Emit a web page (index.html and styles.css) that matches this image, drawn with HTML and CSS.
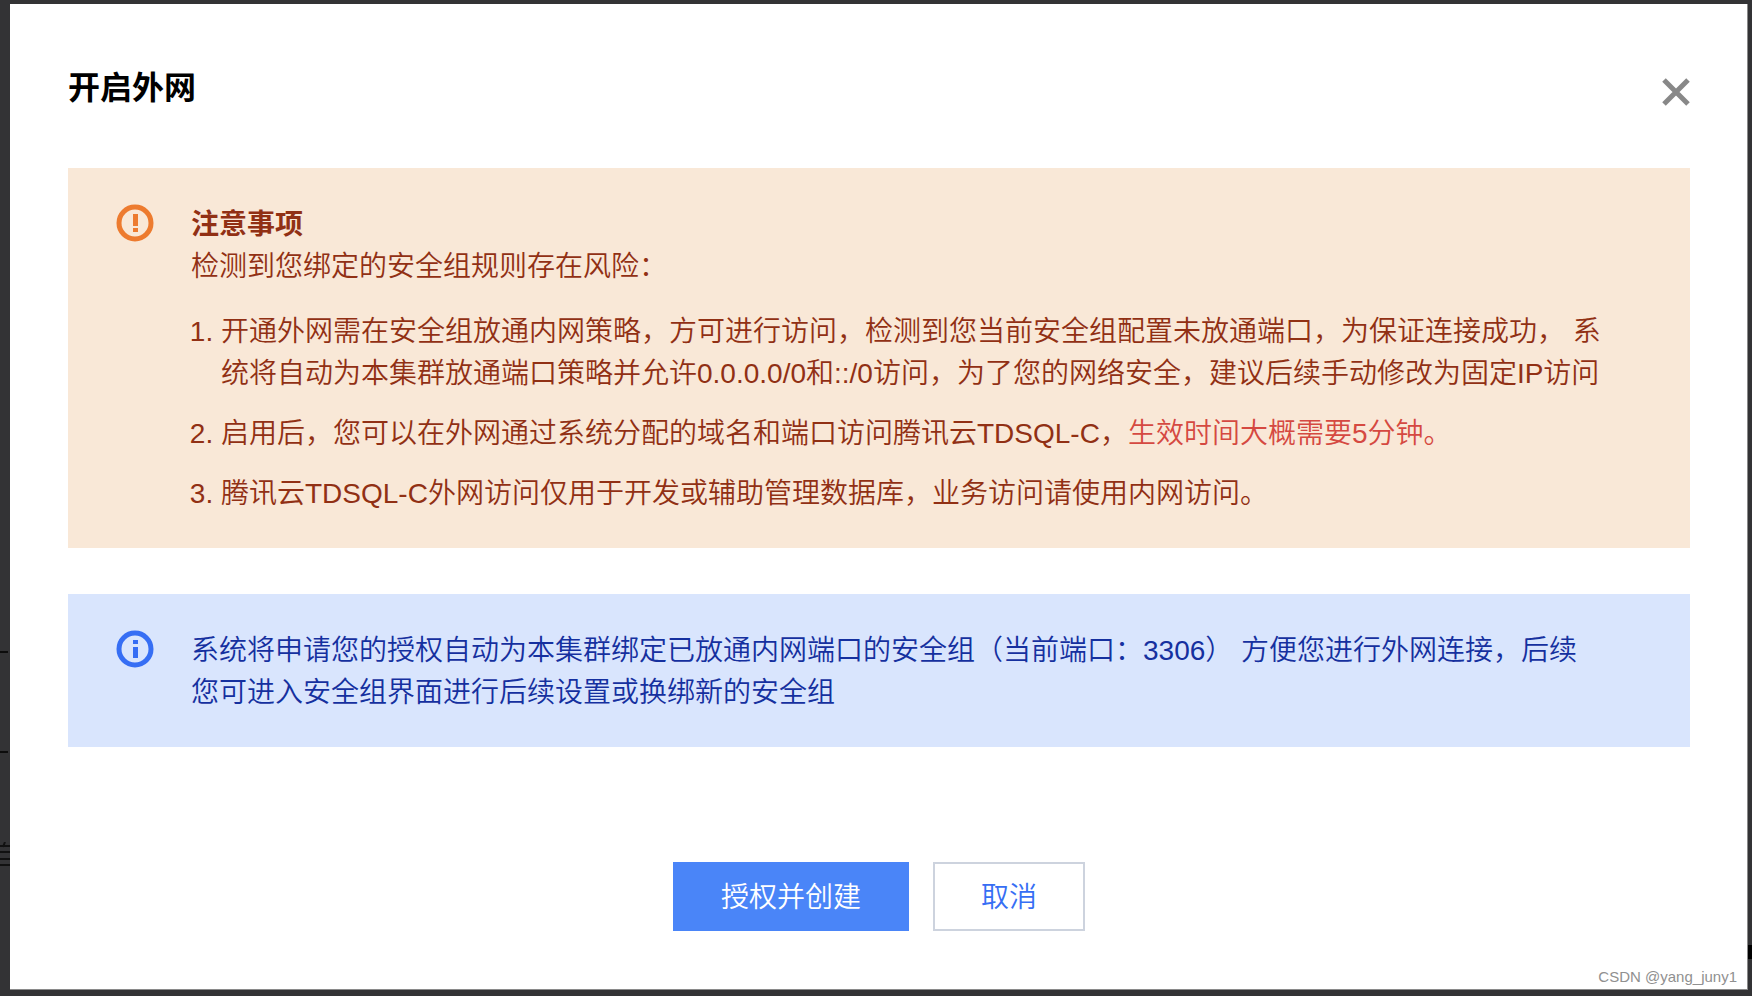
FILE: index.html
```html
<!DOCTYPE html>
<html lang="zh-CN">
<head>
  <meta charset="utf-8">
  <title>开启外网</title>
  <meta name="viewport" content="width=device-width, initial-scale=1">
  <link rel="stylesheet" href="styles.css">
</head>
<body>

  <!-- page content that shows beside the dialog -->
  <div class="page-behind" aria-hidden="true">
    <span class="dash dash-first"></span>
    <span class="dash dash-second"></span>
    <svg class="edge-mark" width="10" height="24" viewBox="0 0 10 24" stroke="#111" stroke-width="2">
      <path d="M5 0L3 5M0 4H10M0 10H10M0 17H10M0 23H10" />
    </svg>
    <span class="scroll-mark"></span>
  </div>

  <div class="dialog" role="dialog" aria-labelledby="dialog-title">
    <header class="dialog-header">
      <h1 id="dialog-title">开启外网</h1>
      <button type="button" class="close" aria-label="关闭">
        <svg width="28" height="28" viewBox="0 0 28 28" fill="none" stroke="#888" stroke-width="5">
          <path d="M2 2L26 26M26 2L2 26" />
        </svg>
      </button>
    </header>

    <section class="alert alert-warning">
      <svg class="alert-icon" width="38" height="38" viewBox="0 0 38 38">
        <circle cx="19" cy="19" r="16" fill="none" stroke="#ed7b2f" stroke-width="5" />
        <path d="M17 10h5v12h-5zM17 24h5v4h-5z" fill="#ed7b2f" />
      </svg>
      <div class="alert-body">
        <h2>注意事项</h2>
        <p>检测到您绑定的安全组规则存在风险：</p>
        <ol>
          <li>开通外网需在安全组放通内网策略，方可进行访问，检测到您当前安全组配置未放通端口，为保证连接成功， 系统将自动为本集群放通端口策略并允许0.0.0.0/0和::/0访问，为了您的网络安全，建议后续手动修改为固定IP访问</li>
          <li>启用后，您可以在外网通过系统分配的域名和端口访问腾讯云TDSQL-C，<span class="danger">生效时间大概需要5分钟。</span></li>
          <li>腾讯云TDSQL-C外网访问仅用于开发或辅助管理数据库，业务访问请使用内网访问。</li>
        </ol>
      </div>
    </section>

    <section class="alert alert-info">
      <svg class="alert-icon" width="38" height="38" viewBox="0 0 38 38">
        <circle cx="19" cy="19" r="16" fill="none" stroke="#366ef4" stroke-width="5" />
        <path d="M17 10h5v4h-5zM17 17h5v11h-5z" fill="#366ef4" />
      </svg>
      <div class="alert-body">
        <p>系统将申请您的授权自动为本集群绑定已放通内网端口的安全组（当前端口：3306） 方便您进行外网连接，后续您可进入安全组界面进行后续设置或换绑新的安全组</p>
      </div>
    </section>

    <footer class="dialog-footer">
      <button type="button" class="btn btn-primary">授权并创建</button>
      <button type="button" class="btn">取消</button>
    </footer>

    <span class="watermark">CSDN @yang_juny1</span>
  </div>

</body>
</html>
```
FILE: styles.css
```css
* {
  box-sizing: border-box;
}
body {
  margin: 0;
  min-height: 100vh;
  padding: 4px 4px 6px 10px;
  display: flex;
  background: #333335;
  font-family: "Liberation Sans", "Noto Sans CJK SC", sans-serif;
  font-size: 28px;
  font-weight: 350;
  line-height: 42px;
}
h1, h2, p, ol {
  margin: 0;
  padding: 0;
}

.page-behind {
  position: absolute;
  inset: 0;
}
.dash {
  position: absolute;
  left: 0;
  width: 8px;
  height: 2px;
  background: #0c0c0c;
}
.dash-first {
  top: 651px;
}
.dash-second {
  top: 751px;
}
.edge-mark {
  position: absolute;
  left: 0;
  top: 842px;
}
.scroll-mark {
  position: absolute;
  right: 0;
  top: 945px;
  width: 4px;
  height: 14px;
  background: #000;
}

.dialog {
  position: relative;
  flex: 1;
  padding: 63px 57px 40px 58px;
  border: 1px solid #8a8a8a;
  border-width: 0 1px 1px 0;
  background: #fff;
}
.dialog-header {
  display: flex;
  justify-content: space-between;
  align-items: center;
  margin-bottom: 59px;
}
.dialog-header h1 {
  font-size: 32px;
  font-weight: 700;
  color: #000;
}
.close {
  display: flex;
  padding: 8px 0 0;
  border: 0;
  background: none;
  cursor: pointer;
}

.alert {
  display: flex;
  align-items: flex-start;
  gap: 37px;
  margin-bottom: 46px;
  padding: 36px 86px 33px 48px;
}
.alert-icon {
  flex: none;
}
.alert-body {
  flex: 1;
}
.alert-body h2 {
  font-size: 28px;
  font-weight: 700;
}
.alert-warning {
  background: #f9e8d7;
  color: #913014;
}
.alert-info {
  background: #d9e5fd;
  color: #15309f;
}
.alert-body ol {
  margin-top: 23px;
  padding-left: 30px;
}
.alert-body li + li {
  margin-top: 18px;
}
.danger {
  color: #d54941;
}

.dialog-footer {
  display: flex;
  justify-content: center;
  gap: 24px;
  margin-top: 115px;
}
.btn {
  height: 69px;
  padding: 2px 46px 0;
  border: 2px solid #cdd3de;
  background: #fff;
  color: #366ef4;
  font: inherit;
  cursor: pointer;
}
.btn-primary {
  border-color: #4a85f8;
  background: #4a85f8;
  color: #fff;
}

.watermark {
  position: absolute;
  right: 10px;
  bottom: 2px;
  font-size: 15px;
  line-height: 20px;
  color: #909090;
}
```
